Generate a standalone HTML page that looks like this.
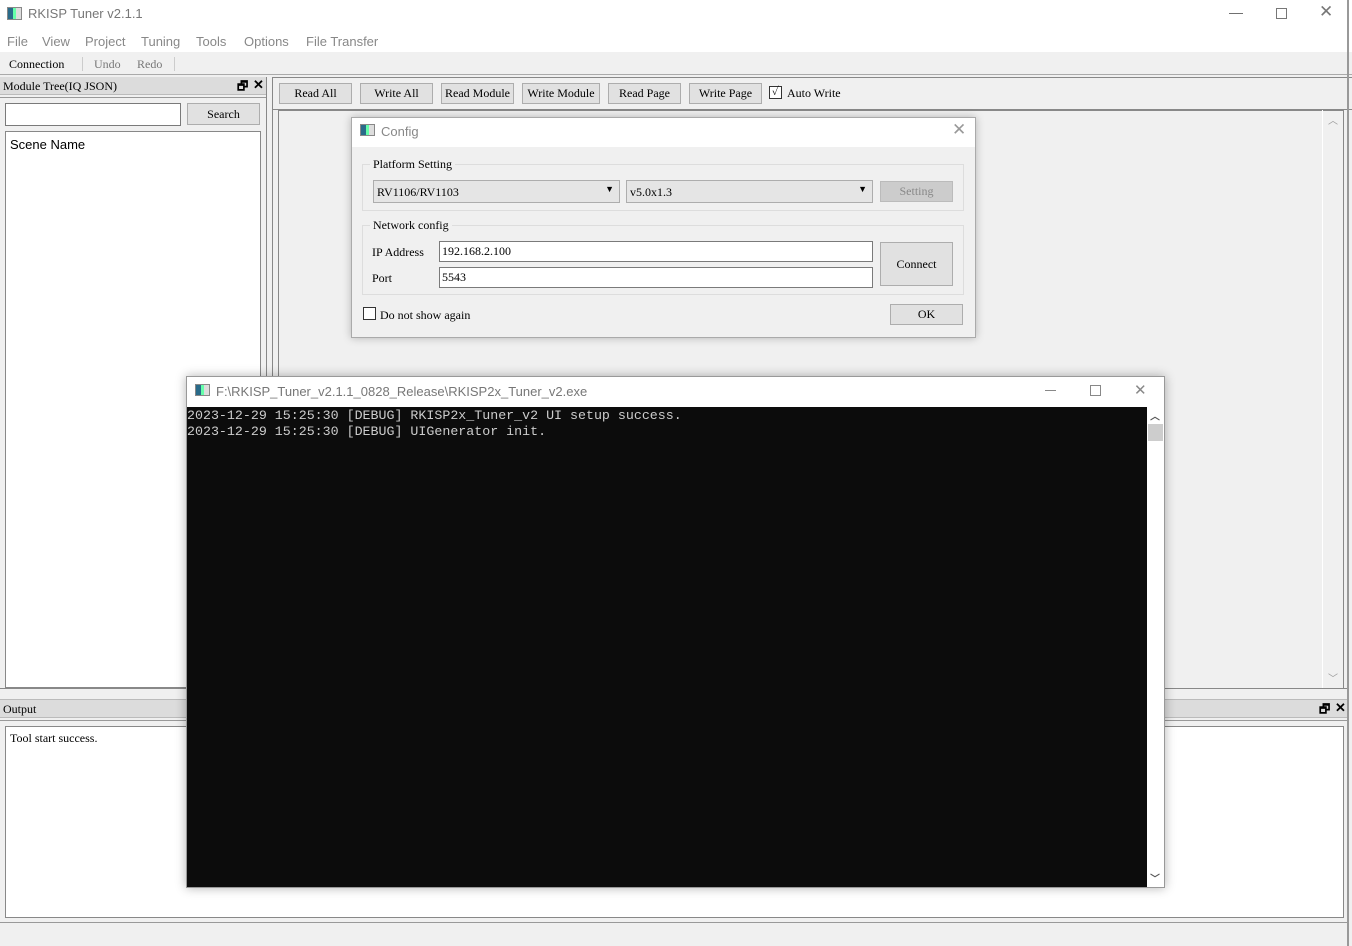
<!DOCTYPE html>
<html><head><meta charset="utf-8"><style>
*{box-sizing:border-box;margin:0;padding:0}
body{width:1352px;height:946px;background:#f0f0f0;position:relative;overflow:hidden;font-family:"Liberation Serif","Noto Serif CJK SC",serif;font-size:12px;color:#000}
.a{position:absolute}
.ui{font-family:"Liberation Sans","Noto Sans CJK SC",sans-serif}
.btn{position:absolute;background:#e1e1e1;border:1px solid #adadad;text-align:center;font-size:12px}
.in{position:absolute;background:#fff;border:1px solid #7a7a7a}
.mono{font-family:"Liberation Mono","Noto Sans CJK SC",monospace}
.m{position:absolute;top:34px;font-size:13px;color:#888}
</style></head><body>
<div class="a" style="left:0;top:0;width:1352px;height:52px;background:#fff"></div>
<div class="a" style="left:7px;top:7px;width:15px;height:13px;border:1px solid #888;background:linear-gradient(90deg,#2a6b8a 0 40%,#6fa 40% 60%,#ddd 60%)"></div>
<div class="a ui" style="left:28px;top:6px;font-size:13px;color:#777">RKISP Tuner v2.1.1</div>
<div class="a ui" style="left:1229px;top:4px;font-size:14px;color:#666">—</div>
<div class="a" style="left:1276px;top:8px;width:11px;height:11px;border:1px solid #777"></div>
<div class="a ui" style="left:1319px;top:2px;font-size:17px;color:#777">✕</div>
<div class="m ui" style="left:7px">File</div>
<div class="m ui" style="left:42px">View</div>
<div class="m ui" style="left:85px">Project</div>
<div class="m ui" style="left:141px">Tuning</div>
<div class="m ui" style="left:196px">Tools</div>
<div class="m ui" style="left:244px">Options</div>
<div class="m ui" style="left:306px">File Transfer</div>
<div class="a" style="left:9px;top:57px">Connection</div>
<div class="a" style="left:82px;top:57px;width:1px;height:14px;background:#ccc"></div>
<div class="a" style="left:94px;top:57px;color:#777">Undo</div>
<div class="a" style="left:137px;top:57px;color:#777">Redo</div>
<div class="a" style="left:174px;top:57px;width:1px;height:14px;background:#ccc"></div>
<div class="a" style="left:0;top:74px;width:1352px;height:1px;background:#aaa"></div>
<div class="a" style="left:0;top:77px;width:266px;height:18px;background:#dcdcdc;border-bottom:1px solid #bbb"></div>
<div class="a" style="left:3px;top:79px">Module Tree(IQ JSON)</div>
<div class="a" style="left:237px;top:77px;font-size:12px;font-weight:bold">🗗</div>
<div class="a ui" style="left:253px;top:77px;font-size:13px;font-weight:bold">✕</div>
<div class="a" style="left:0;top:97px;width:266px;height:1px;background:#999"></div>
<div class="in" style="left:5px;top:103px;width:176px;height:23px"></div>
<div class="btn" style="left:187px;top:103px;width:73px;height:22px;line-height:20px">Search</div>
<div class="in" style="left:5px;top:131px;width:256px;height:557px;border-color:#888"></div>
<div class="a ui" style="left:10px;top:137px;font-size:13px">Scene Name</div>
<div class="a" style="left:266px;top:77px;width:1px;height:612px;background:#888"></div>
<div class="a" style="left:272px;top:77px;width:1px;height:612px;background:#888"></div>
<div class="a" style="left:272px;top:77px;width:1080px;height:1px;background:#888"></div>
<div class="btn" style="left:279px;top:83px;width:73px;height:21px;line-height:19px">Read All</div>
<div class="btn" style="left:360px;top:83px;width:73px;height:21px;line-height:19px">Write All</div>
<div class="btn" style="left:441px;top:83px;width:73px;height:21px;line-height:19px">Read Module</div>
<div class="btn" style="left:522px;top:83px;width:78px;height:21px;line-height:19px">Write Module</div>
<div class="btn" style="left:608px;top:83px;width:73px;height:21px;line-height:19px">Read Page</div>
<div class="btn" style="left:689px;top:83px;width:73px;height:21px;line-height:19px">Write Page</div>
<div class="a" style="left:769px;top:86px;width:13px;height:13px;border:1px solid #333;background:#fff;font-size:11px;line-height:11px;text-align:center">✓</div>
<div class="a" style="left:787px;top:86px">Auto Write</div>
<div class="a" style="left:272px;top:109px;width:1080px;height:1px;background:#888"></div>
<div class="a" style="left:278px;top:110px;width:1066px;height:579px;border:1px solid #888;border-bottom:none"></div>
<div class="a" style="left:1322px;top:110px;width:22px;height:578px;border-left:1px solid #fff"></div>
<div class="a ui" style="left:1328px;top:112px;font-size:10px;color:#999">︿</div>
<div class="a ui" style="left:1328px;top:670px;font-size:10px;color:#999">﹀</div>
<div class="a" style="left:1347px;top:0;width:2px;height:946px;background:#999"></div>
<div class="a" style="left:0;top:688px;width:1347px;height:1px;background:#888"></div>
<div class="a" style="left:0;top:699px;width:1347px;height:19px;background:#dcdcdc;border-top:1px solid #bbb;border-bottom:1px solid #bbb"></div>
<div class="a" style="left:3px;top:702px">Output</div>
<div class="a" style="left:1319px;top:700px;font-size:12px;font-weight:bold">🗗</div>
<div class="a ui" style="left:1335px;top:700px;font-size:13px;font-weight:bold">✕</div>
<div class="a" style="left:0;top:720px;width:1347px;height:1px;background:#999"></div>
<div class="in" style="left:5px;top:726px;width:1339px;height:192px;border-color:#888"></div>
<div class="a" style="left:10px;top:731px">Tool start success.</div>
<div class="a" style="left:0;top:922px;width:1347px;height:1px;background:#999"></div>
<div class="a" style="left:351px;top:117px;width:625px;height:221px;background:#f0f0f0;border:1px solid #aaa;box-shadow:0 0 8px rgba(0,0,0,.25)"></div>
<div class="a" style="left:352px;top:118px;width:623px;height:29px;background:#fff"></div>
<div class="a" style="left:360px;top:124px;width:15px;height:12px;border:1px solid #888;background:linear-gradient(90deg,#2a6b8a 0 40%,#6fa 40% 60%,#ddd 60%)"></div>
<div class="a ui" style="left:381px;top:124px;font-size:13px;color:#888">Config</div>
<div class="a ui" style="left:952px;top:120px;font-size:17px;color:#999">✕</div>
<div class="a" style="left:362px;top:164px;width:602px;height:47px;border:1px solid #ddd"></div>
<div class="a" style="left:370px;top:157px;background:#f0f0f0;padding:0 3px">Platform Setting</div>
<div class="a" style="left:373px;top:180px;width:247px;height:23px;background:#e5e5e5;border:1px solid #adadad;padding:4px 3px">RV1106/RV1103<span style="position:absolute;right:5px;top:3px;font-size:9px">▼</span></div>
<div class="a" style="left:626px;top:180px;width:247px;height:23px;background:#e5e5e5;border:1px solid #adadad;padding:4px 3px">v5.0x1.3<span style="position:absolute;right:5px;top:3px;font-size:9px">▼</span></div>
<div class="btn" style="left:880px;top:181px;width:73px;height:21px;line-height:19px;background:#ccc;border-color:#bbb;color:#888">Setting</div>
<div class="a" style="left:362px;top:225px;width:602px;height:70px;border:1px solid #ddd"></div>
<div class="a" style="left:370px;top:218px;background:#f0f0f0;padding:0 3px">Network config</div>
<div class="a" style="left:372px;top:245px">IP Address</div>
<div class="in" style="left:439px;top:241px;width:434px;height:21px;padding:2px 2px">192.168.2.100</div>
<div class="a" style="left:372px;top:271px">Port</div>
<div class="in" style="left:439px;top:267px;width:434px;height:21px;padding:2px 2px">5543</div>
<div class="btn" style="left:880px;top:242px;width:73px;height:44px;line-height:42px">Connect</div>
<div class="a" style="left:363px;top:307px;width:13px;height:13px;border:1px solid #333;background:#fff"></div>
<div class="a" style="left:380px;top:308px">Do not show again</div>
<div class="btn" style="left:890px;top:304px;width:73px;height:21px;line-height:19px">OK</div>
<div class="a" style="left:186px;top:376px;width:979px;height:512px;background:#fff;border:1px solid #999;box-shadow:0 0 10px rgba(0,0,0,.3)"></div>
<div class="a" style="left:195px;top:384px;width:15px;height:12px;border:1px solid #888;background:linear-gradient(90deg,#2a6b8a 0 40%,#6fa 40% 60%,#ddd 60%)"></div>
<div class="a ui" style="left:216px;top:384px;font-size:13px;color:#777">F:\RKISP_Tuner_v2.1.1_0828_Release\RKISP2x_Tuner_v2.exe</div>
<div class="a" style="left:1045px;top:390px;width:11px;height:1px;background:#888"></div>
<div class="a" style="left:1090px;top:385px;width:11px;height:11px;border:1px solid #888"></div>
<div class="a ui" style="left:1134px;top:381px;font-size:15px;color:#888">✕</div>
<div class="a" style="left:187px;top:407px;width:960px;height:480px;background:#0c0c0c"></div>
<div class="a" style="left:1147px;top:407px;width:17px;height:480px;background:#fff"></div>
<div class="a" style="left:1148px;top:424px;width:15px;height:17px;background:#cdcdcd"></div>
<div class="a ui" style="left:1150px;top:408px;font-size:10px;color:#555;font-weight:bold">︿</div>
<div class="a ui" style="left:1150px;top:870px;font-size:10px;color:#555;font-weight:bold">﹀</div>
<div class="a mono" style="left:187px;top:408px;color:#ccc;font-size:13.3px;line-height:16px;white-space:pre">2023-12-29 15:25:30 [DEBUG] RKISP2x_Tuner_v2 UI setup success.
2023-12-29 15:25:30 [DEBUG] UIGenerator init.</div>
</body></html>
